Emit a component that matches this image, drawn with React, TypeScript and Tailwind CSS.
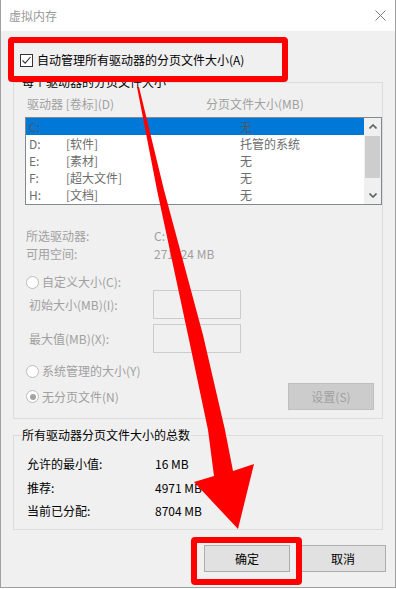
import React from 'react'

const drives = [
  { d: 'C:', label: '', size: '无', selected: true },
  { d: 'D:', label: '[软件]', size: '托管的系统' },
  { d: 'E:', label: '[素材]', size: '无' },
  { d: 'F:', label: '[超大文件]', size: '无' },
  { d: 'H:', label: '[文档]', size: '无' },
]

function Radio({ checked }: { checked?: boolean }) {
  return (
    <span className="w-[13px] h-[13px] rounded-full border border-[#bcbcbc] bg-white flex items-center justify-center shrink-0">
      {checked && <span className="w-[6px] h-[6px] rounded-full bg-[#a3a3a3]" />}
    </span>
  )
}

function Chevron({ up }: { up?: boolean }) {
  return (
    <svg width="8" height="5" viewBox="0 0 8 5">
      <path d={up ? 'M0.5 4.5 L4 1 L7.5 4.5' : 'M0.5 0.5 L4 4 L7.5 0.5'} fill="none" stroke="#606060" strokeWidth="1.6" />
    </svg>
  )
}

export default function App() {
  return (
    <div className="relative w-[396px] h-[589px] bg-white font-['Microsoft_YaHei_UI','Noto_Sans_CJK_SC',sans-serif] text-[12px] leading-[16px] text-black overflow-hidden">
      <div className="w-[396px] h-[588px] flex flex-col border-x border-b border-[#a0a0a0] bg-[#f0f0f0]">
        {/* Title bar */}
        <div className="h-[31px] shrink-0 bg-white flex items-center justify-between pl-[8px] pr-[9px]">
          <span className="text-[#999999]">虚拟内存</span>
          <svg width="11" height="11" viewBox="0 0 11 11">
            <path d="M0.5 0.5 L10.5 10.5 M10.5 0.5 L0.5 10.5" stroke="#7a7a7a" strokeWidth="1" />
          </svg>
        </div>

        <div className="flex flex-col pl-[12px]">
          {/* Auto manage */}
          <div className="mt-[21px] h-[16px] flex items-center gap-[4px] pl-[7px]">
            <span className="w-[13px] h-[13px] border border-[#333333] bg-white flex items-center justify-center">
              <svg width="11" height="11" viewBox="0 0 11 11">
                <path d="M1.5 5.5 L4.2 8.2 L9.5 2" fill="none" stroke="#333333" strokeWidth="1.1" />
              </svg>
            </span>
            <span>自动管理所有驱动器的分页文件大小(A)</span>
          </div>

          {/* Per drive */}
          <fieldset className="mt-[6px] w-[370px] border border-[#dcdcdc] p-0 pb-[8px]">
            <legend className="ml-[7px] px-[1px] leading-[16px]">每个驱动器的分页文件大小</legend>
            <div className="mt-[6px] h-[16px] flex pl-[13px] text-[#a0a0a0]">
              <span className="w-[179px]">驱动器 [卷标](D)</span>
              <span>分页文件大小(MB)</span>
            </div>

            <div className="mt-[5px] ml-[11px] w-[357px] h-[88px] border border-[#828790] bg-white flex">
              <div className="w-[338px] flex flex-col text-[#6d6d6d]">
                {drives.map((r) => (
                  <div key={r.d} className={`h-[17px] flex items-center ${r.selected ? 'bg-[#0078d7] w-[339px] text-[#4d5866]' : ''}`}>
                    <span className="w-[40px] pl-[3px]">{r.d}</span>
                    <span className="w-[174px]">{r.label}</span>
                    <span>{r.size}</span>
                  </div>
                ))}
              </div>
              <div className="ml-auto w-[17px] flex flex-col bg-[#f0f0f0]">
                <div className="h-[17px] flex items-center justify-center">
                  <Chevron up />
                </div>
                <div className="flex-1 flex flex-col pt-[1px]">
                  <div className="h-[42px] bg-[#cdcdcd] mx-[1px]" />
                </div>
                <div className="h-[17px] flex items-center justify-center">
                  <Chevron />
                </div>
              </div>
            </div>

            <div className="mt-[23px] h-[16px] flex pl-[12px] text-[#a0a0a0]">
              <span className="w-[128px]">所选驱动器:</span>
              <span>C:</span>
            </div>
            <div className="mt-[2px] h-[16px] flex pl-[12px] text-[#a0a0a0]">
              <span className="w-[128px]">可用空间:</span>
              <span>271124 MB</span>
            </div>

            <div className="mt-[12px] h-[16px] flex items-center gap-[3px] pl-[12px] text-[#a0a0a0]">
              <Radio />
              <span>自定义大小(C):</span>
            </div>
            <div className="h-[29px] flex items-center pl-[15px] text-[#a0a0a0]">
              <span className="w-[124px]">初始大小(MB)(I):</span>
              <span className="w-[88px] h-[29px] border border-[#cccccc] bg-[#f0f0f0]" />
            </div>
            <div className="mt-[5px] h-[29px] flex items-center pl-[15px] text-[#a0a0a0]">
              <span className="w-[124px]">最大值(MB)(X):</span>
              <span className="w-[88px] h-[29px] border border-[#cccccc] bg-[#f0f0f0]" />
            </div>

            <div className="mt-[10px] h-[16px] flex items-center gap-[3px] pl-[12px] text-[#a0a0a0]">
              <Radio />
              <span>系统管理的大小(Y)</span>
            </div>
            <div className="mt-[4px] h-[27px] flex items-center pl-[12px] pr-[8px] text-[#a0a0a0]">
              <Radio checked />
              <span className="ml-[3px]">无分页文件(N)</span>
              <span className="ml-auto w-[86px] h-[27px] border border-[#bfbfbf] bg-[#cccccc] flex items-center justify-center">
                设置(S)
              </span>
            </div>
          </fieldset>

          {/* Totals */}
          <fieldset className="mt-[8px] w-[370px] border border-[#dcdcdc] p-0 pb-[10px]">
            <legend className="ml-[7px] px-[1px] leading-[16px]">所有驱动器分页文件大小的总数</legend>
            <div className="mt-[13px] h-[16px] flex pl-[13px]">
              <span className="w-[128px]">允许的最小值:</span>
              <span>16 MB</span>
            </div>
            <div className="mt-[8px] h-[16px] flex pl-[13px]">
              <span className="w-[128px]">推荐:</span>
              <span>4971 MB</span>
            </div>
            <div className="mt-[7px] h-[16px] flex pl-[13px]">
              <span className="w-[128px]">当前已分配:</span>
              <span>8704 MB</span>
            </div>
          </fieldset>
        </div>

        {/* Buttons */}
        <div className="mt-[15px] flex justify-end gap-[10px] pr-[9px]">
          <button className="w-[86px] h-[27px] border border-[#adadad] bg-[#e1e1e1]">确定</button>
          <button className="w-[86px] h-[27px] border border-[#adadad] bg-[#e1e1e1]">取消</button>
        </div>
      </div>

      {/* Annotations */}
      <div className="absolute left-[8px] top-[37px] w-[280px] h-[45px] border-[6px] border-[#ff0000] rounded-[4px] pointer-events-none" />
      <div className="absolute left-[191px] top-[537px] w-[111px] h-[48px] border-[6px] border-[#ff0000] rounded-[4px] pointer-events-none" />
      <svg className="absolute left-0 top-0 pointer-events-none" width="396" height="589" viewBox="0 0 396 589">
        <polygon
          fill="#ff0000"
          points="137,87 139,87 164,190 203,335 225,430 233,471 254,464 238,529 194,482 214,476 208,430 188,335 157,190"
        />
      </svg>
    </div>
  )
}
